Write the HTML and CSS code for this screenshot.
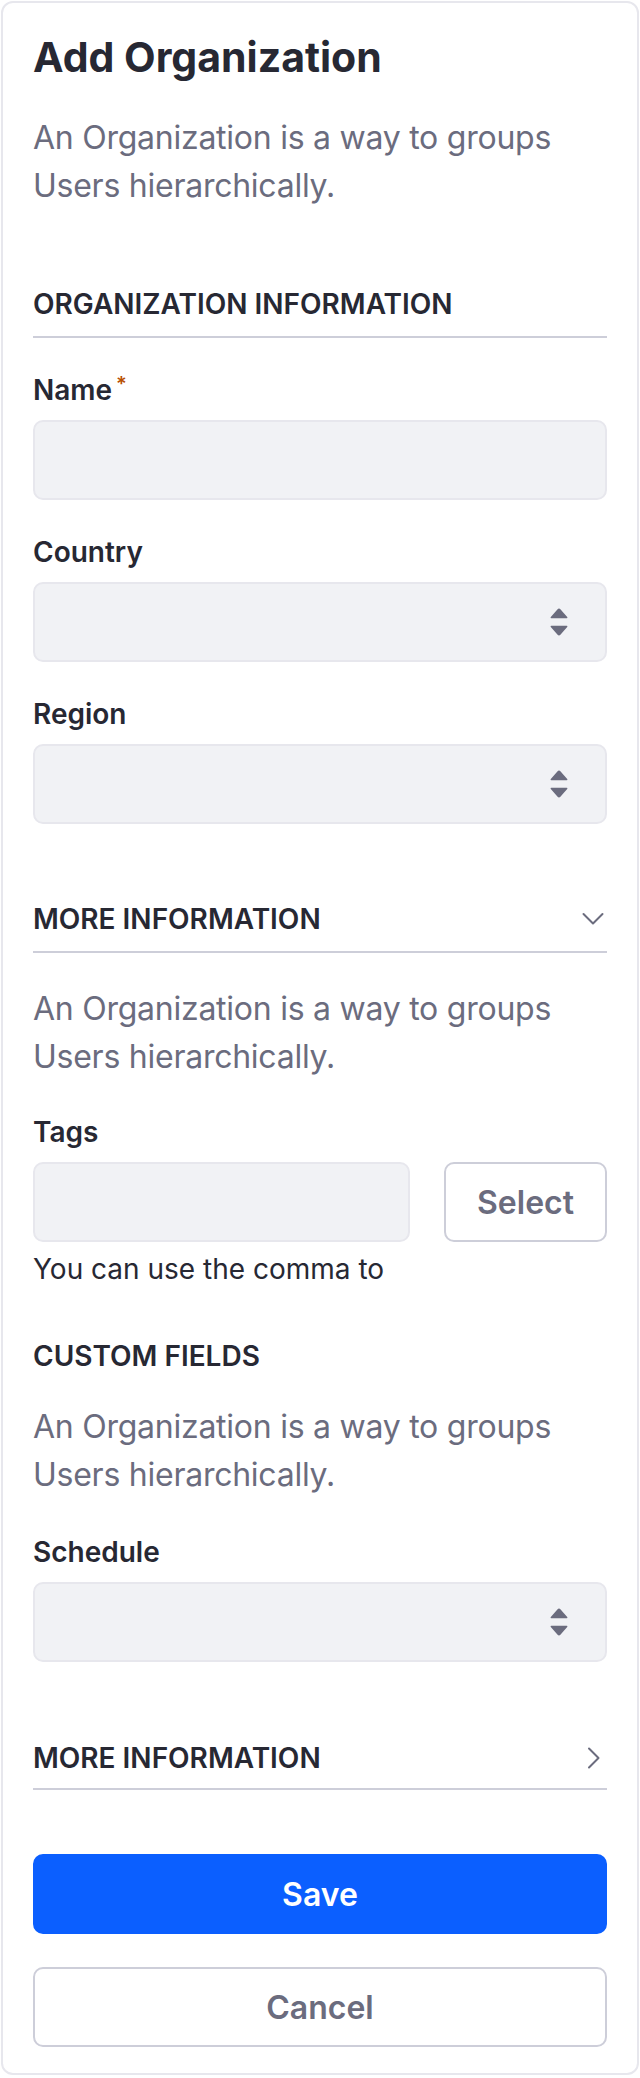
FILE: index.html
```html
<!DOCTYPE html>
<html lang="en">
<head>
<meta charset="utf-8">
<title>Add Organization</title>
<link rel="stylesheet" href="styles.css">
</head>
<body>
<div class="card">
  <h1 class="title">Add Organization</h1>
  <p class="desc desc-top">An Organization is a way to groups Users hierarchically.</p>

  <div class="section-head sh-org">ORGANIZATION INFORMATION</div>

  <div class="field">
    <label class="label">Name<span class="req">*</span></label>
    <div class="input"></div>
  </div>
  <div class="field">
    <label class="label">Country</label>
    <div class="input select">
      <svg class="caret" width="18" height="28" viewBox="0 0 18 28"><path d="M9 0.5 Q9.8 0.5 10.4 1.3 L17.2 9 Q18 10.2 16.6 10.2 L1.4 10.2 Q0 10.2 0.8 9 L7.6 1.3 Q8.2 0.5 9 0.5Z" fill="#6b6c7e"/><path d="M9 27.5 Q9.8 27.5 10.4 26.7 L17.2 19 Q18 17.8 16.6 17.8 L1.4 17.8 Q0 17.8 0.8 19 L7.6 26.7 Q8.2 27.5 9 27.5Z" fill="#6b6c7e"/></svg>
    </div>
  </div>
  <div class="field">
    <label class="label">Region</label>
    <div class="input select">
      <svg class="caret" width="18" height="28" viewBox="0 0 18 28"><path d="M9 0.5 Q9.8 0.5 10.4 1.3 L17.2 9 Q18 10.2 16.6 10.2 L1.4 10.2 Q0 10.2 0.8 9 L7.6 1.3 Q8.2 0.5 9 0.5Z" fill="#6b6c7e"/><path d="M9 27.5 Q9.8 27.5 10.4 26.7 L17.2 19 Q18 17.8 16.6 17.8 L1.4 17.8 Q0 17.8 0.8 19 L7.6 26.7 Q8.2 27.5 9 27.5Z" fill="#6b6c7e"/></svg>
    </div>
  </div>

  <div class="section-head collapse sh-more1">
    <span>MORE INFORMATION</span>
    <svg class="chev" width="22" height="14" viewBox="0 0 22 14"><path d="M1.5 2 L11 11.5 L20.5 2" fill="none" stroke="#6b6c7e" stroke-width="2" stroke-linecap="round" stroke-linejoin="round"/></svg>
  </div>
  <p class="desc desc-more">An Organization is a way to groups Users hierarchically.</p>

  <div class="field field-tags">
    <label class="label">Tags</label>
    <div class="tags-row">
      <div class="input tags-input"></div>
      <button class="btn btn-secondary btn-select">Select</button>
    </div>
    <div class="help">You can use the comma to</div>
  </div>

  <div class="section-head plain sh-custom">CUSTOM FIELDS</div>
  <p class="desc desc-custom">An Organization is a way to groups Users hierarchically.</p>

  <div class="field field-schedule">
    <label class="label">Schedule</label>
    <div class="input select">
      <svg class="caret" width="18" height="28" viewBox="0 0 18 28"><path d="M9 0.5 Q9.8 0.5 10.4 1.3 L17.2 9 Q18 10.2 16.6 10.2 L1.4 10.2 Q0 10.2 0.8 9 L7.6 1.3 Q8.2 0.5 9 0.5Z" fill="#6b6c7e"/><path d="M9 27.5 Q9.8 27.5 10.4 26.7 L17.2 19 Q18 17.8 16.6 17.8 L1.4 17.8 Q0 17.8 0.8 19 L7.6 26.7 Q8.2 27.5 9 27.5Z" fill="#6b6c7e"/></svg>
    </div>
  </div>

  <div class="section-head collapse sh-more2">
    <span>MORE INFORMATION</span>
    <svg class="chev-r" width="14" height="22" viewBox="0 0 14 22"><path d="M2 1.5 L11.5 11 L2 20.5" fill="none" stroke="#6b6c7e" stroke-width="2" stroke-linecap="round" stroke-linejoin="round"/></svg>
  </div>

  <div class="actions">
    <button class="btn btn-primary">Save</button>
    <button class="btn btn-secondary">Cancel</button>
  </div>
</div>
</body>
</html>
```

FILE: styles.css
```css
* { box-sizing: border-box; }

html, body {
  margin: 0;
  padding: 0;
  background: #ffffff;
}

body {
  padding: 1px 1px 0 1px;
  font-family: Inter, "Noto Sans", "Liberation Sans", sans-serif;
  color: #272833;
}

.card {
  border: 2px solid #e7e7ed;
  border-radius: 12px;
  padding: 30px 30px 26px 30px;
  background: #fff;
}

.title {
  margin: 0;
  font-size: 41px;
  line-height: 48px;
  font-weight: 700;
  color: #272833;
}

.desc {
  margin: 0;
  font-size: 32px;
  line-height: 48px;
  font-weight: 400;
  letter-spacing: -0.25px;
  color: #6b6c7e;
  padding-right: 20px;
}

.desc-top { margin-top: 33px; }

.section-head {
  font-size: 28px;
  line-height: 36px;
  font-weight: 600;
  color: #272833;
  padding-bottom: 14px;
  border-bottom: 2px solid #cdced9;
  display: flex;
  align-items: center;
  justify-content: space-between;
}

.section-head.plain {
  border-bottom: none;
  padding-bottom: 0;
}

.sh-org { margin-top: 76px; }
.sh-more1 { margin-top: 77px; }
.sh-custom { margin-top: 49px; }
.sh-more2 { margin-top: 78px; padding-bottom: 12px; }

.chev { margin-right: 3px; }
.chev-r { margin-right: 6px; }

.field { margin-top: 32px; }
.field-tags { margin-top: 31px; }
.field-schedule { margin-top: 33px; }

.label {
  display: block;
  font-size: 28px;
  line-height: 40px;
  font-weight: 600;
  color: #272833;
  margin-bottom: 10px;
}

.req {
  color: #b95000;
  font-size: 20px;
  vertical-align: top;
  line-height: 28px;
  margin-left: 4px;
}

.input {
  height: 80px;
  background: #f1f2f5;
  border: 2px solid #e7e7ed;
  border-radius: 10px;
}

.select {
  display: flex;
  align-items: center;
  justify-content: flex-end;
  padding-right: 37px;
}

.desc-more { margin-top: 32px; }
.desc-custom { margin-top: 29px; }

.tags-row {
  display: flex;
  gap: 34px;
}

.tags-input { flex: 1; }

.btn {
  display: block;
  height: 80px;
  border-radius: 10px;
  font-family: Inter, "Noto Sans", "Liberation Sans", sans-serif;
  font-size: 32px;
  font-weight: 600;
  cursor: pointer;
}

.btn-secondary {
  background: #fff;
  border: 2px solid #cdced9;
  color: #6b6c7e;
}

.btn-select { width: 163px; }

.btn-primary {
  background: #0b5fff;
  border: 2px solid #0b5fff;
  color: #fff;
}

.help {
  margin-top: 7px;
  font-size: 28px;
  line-height: 40px;
  color: #272833;
}

.actions {
  margin-top: 64px;
  display: flex;
  flex-direction: column;
  gap: 33px;
}

.actions .btn { width: 100%; }
```
